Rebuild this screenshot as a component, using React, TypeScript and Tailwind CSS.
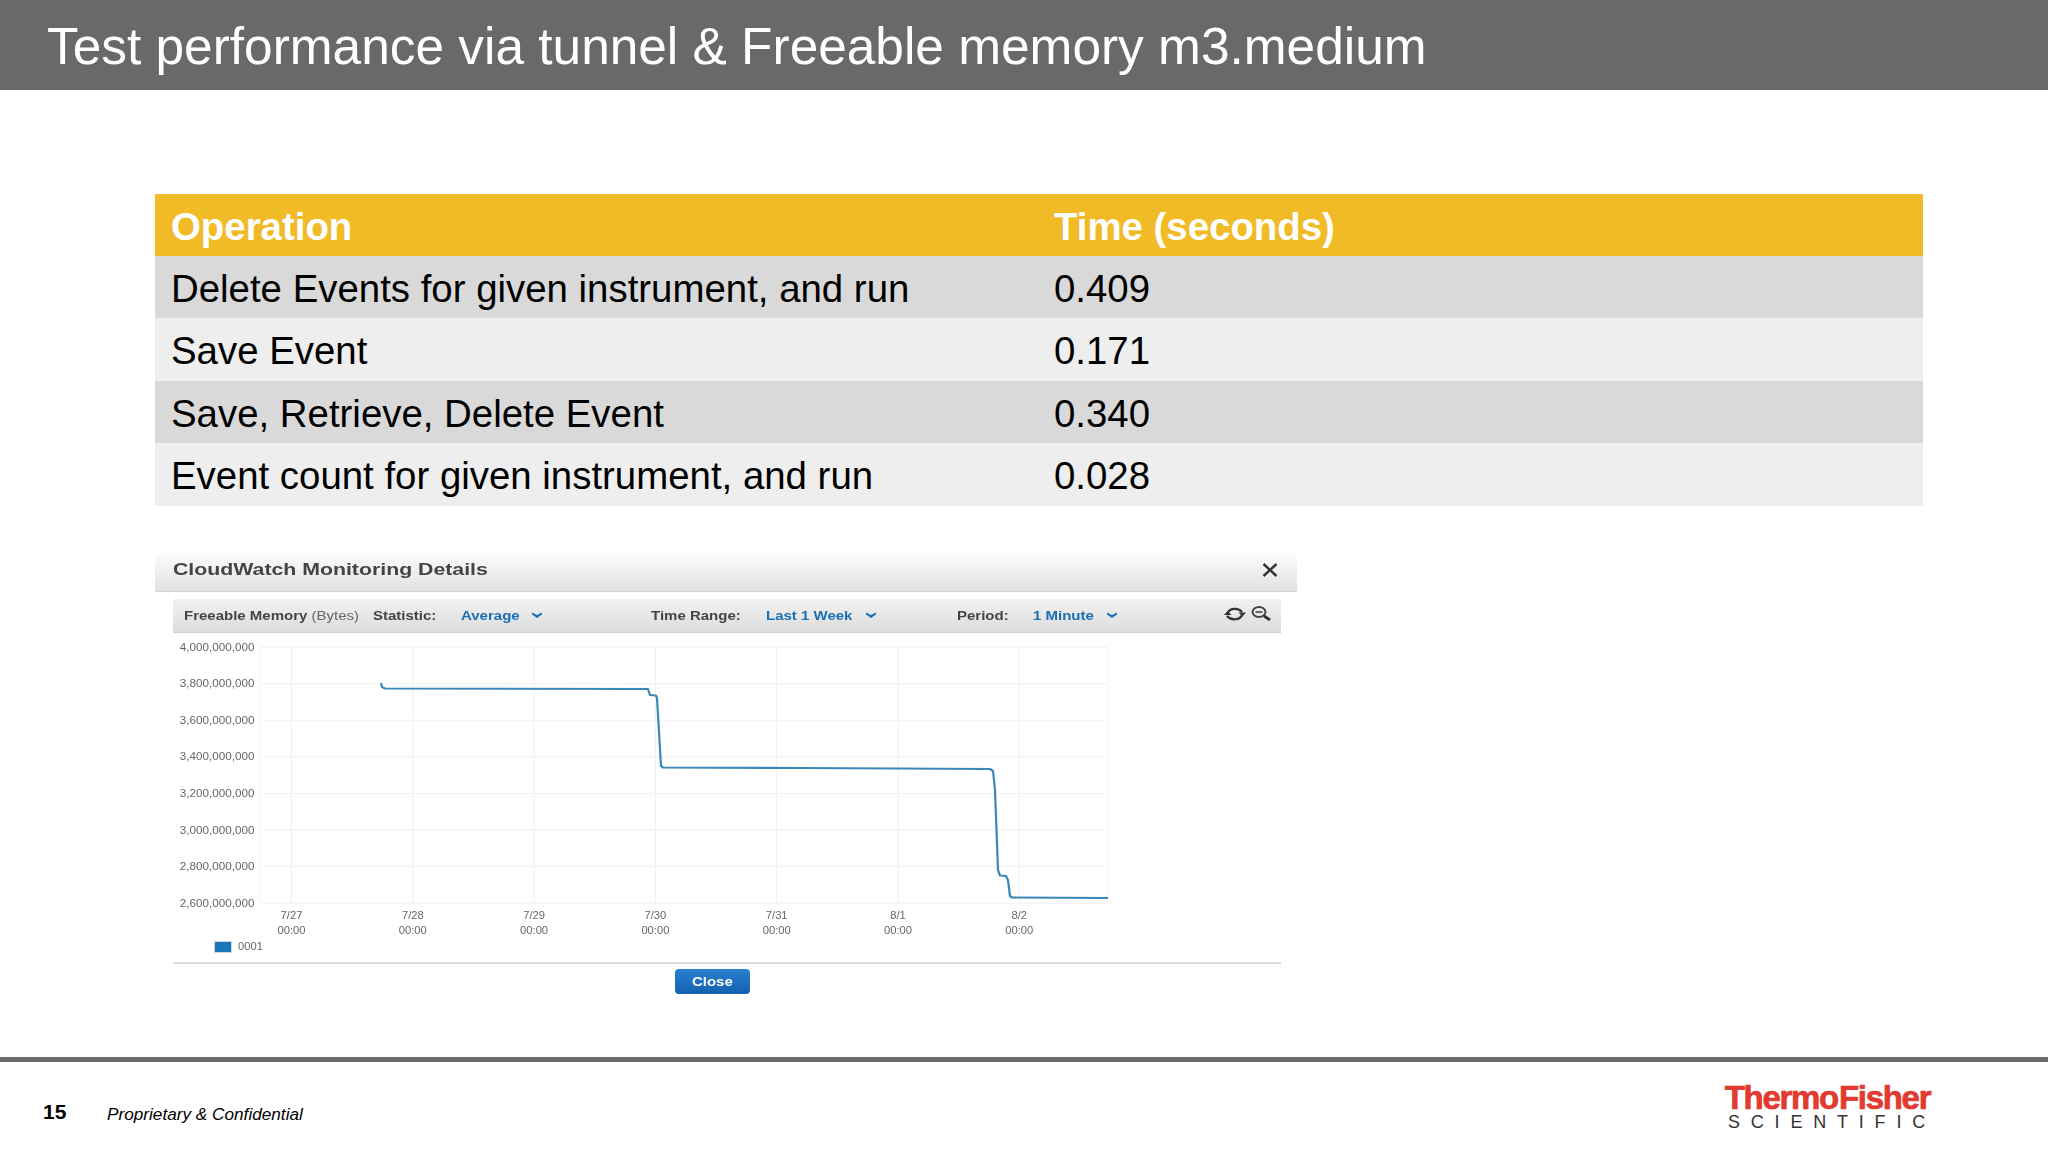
const rows = [
  { op: 'Delete Events for given instrument, and run', time: '0.409', bg: 'bg-[#d9d9d9]' },
  { op: 'Save Event', time: '0.171', bg: 'bg-[#eeeeee]' },
  { op: 'Save, Retrieve, Delete Event', time: '0.340', bg: 'bg-[#d9d9d9]' },
  { op: 'Event count for given instrument, and run', time: '0.028', bg: 'bg-[#eeeeee]' },
];

const yLabels = ['4,000,000,000', '3,800,000,000', '3,600,000,000', '3,400,000,000', '3,200,000,000', '3,000,000,000', '2,800,000,000', '2,600,000,000'];
const xLabels = ['7/27', '7/28', '7/29', '7/30', '7/31', '8/1', '8/2'];

function Chevron({ className }: { className: string }) {
  return (
    <svg viewBox="0 0 10 6" className={`w-[10px] h-[6px] ${className}`}>
      <path d="M0 0.5 L5 3 L10 0.5 L10 2.5 L5 6 L0 2.5 Z" fill="#1a6fb5" />
    </svg>
  );
}

function SyncIcon() {
  return (
    <svg viewBox="0 0 22 14" className="w-[22px] h-[14px] mr-[5px]" fill="none">
      <path d="M4 6 C5 1.5 14 0 18 5" stroke="#333333" strokeWidth="2.2" />
      <path d="M18 8 C16 13 7 14 3 9" stroke="#333333" strokeWidth="2.2" />
      <path d="M14.5 5.5 L22 5.5 L18.5 9.5 Z" fill="#333333" />
      <path d="M0 8 L7.5 8 L3.5 4 Z" fill="#333333" />
    </svg>
  );
}

function ZoomOutIcon() {
  return (
    <svg viewBox="0 0 20 15" className="w-[20px] h-[15px]" fill="none">
      <ellipse cx="8" cy="6" rx="6.5" ry="5" stroke="#444444" strokeWidth="2" />
      <path d="M4.5 6 L11.5 6" stroke="#444444" strokeWidth="1.6" />
      <path d="M13 10 L19 14" stroke="#333333" strokeWidth="2.8" />
    </svg>
  );
}

function Chart() {
  return (
    <svg viewBox="172 633 1108 305" className="block w-[1108px] h-[305px]" fontFamily="'Liberation Sans', Arial, sans-serif">
      {yLabels.map((label, i) => {
        const y = 647 + i * 36.6;
        return (
          <g key={label}>
            <line x1={259} x2={1107} y1={y} y2={y} stroke="#f1f1f3" strokeWidth="1" />
            <text transform={`translate(253.5 ${y + 3.5}) scale(1.17 1)`} textAnchor="end" fontSize="10" fill="#666666">{label}</text>
          </g>
        );
      })}
      <line x1={259} x2={259} y1={647} y2={903} stroke="#f1f1f3" />
      <line x1={1107} x2={1107} y1={647} y2={903} stroke="#f1f1f3" />
      {xLabels.map((label, i) => {
        const x = 290.5 + i * 121.3;
        return (
          <g key={label}>
            <line x1={x} x2={x} y1={647} y2={903} stroke="#efeff2" strokeWidth="1" />
            <text transform={`translate(${x} 919) scale(1.12 1)`} textAnchor="middle" fontSize="10" fill="#666666">{label}</text>
            <text transform={`translate(${x} 934) scale(1.12 1)`} textAnchor="middle" fontSize="10" fill="#666666">00:00</text>
          </g>
        );
      })}
      <path
        d="M380 683 L381 687 L384 688.5 L647 689 L649 695 L655 695.5 L656 698 L660 766 L662 767.5 L800 768 L989 769 L992 771 L994 790 L997 870 L999 875.5 L1005 876 L1007 880 L1009 896 L1011 897.5 L1107 898"
        fill="none"
        stroke="#3a87b8"
        strokeWidth="2.2"
        strokeLinejoin="round"
      />
    </svg>
  );
}

export default function App() {
  return (
    <div className="w-[2048px] h-[1152px] flex flex-col bg-white font-['Liberation_Sans',Arial,sans-serif] overflow-hidden">
      <div className="h-[90px] shrink-0 bg-[#696969] pl-[47px] pt-[4px] flex items-center">
        <h1 className="text-[51.4px] leading-none text-white whitespace-nowrap">Test performance via tunnel &amp; Freeable memory m3.medium</h1>
      </div>

      <div className="flex-1 flex flex-col pl-[155px]">
        {/* Table */}
        <div className="w-[1768px] mt-[104px]">
          <div className="h-[62px] bg-[#f0bb27] pt-[4px] flex items-center text-[38.4px] font-bold text-white">
            <div className="w-[899px] pl-[16px]">Operation</div>
            <div>Time (seconds)</div>
          </div>
          {rows.map((row, i) => (
            <div key={i} className={`h-[62.4px] pt-[3px] flex items-center text-[38.4px] text-black ${row.bg}`}>
              <div className="w-[899px] pl-[16px] whitespace-nowrap">{row.op}</div>
              <div>{row.time}</div>
            </div>
          ))}
        </div>

        {/* CloudWatch dialog */}
        <div className="w-[1142px] mt-[48px] blur-[0.4px]">
          <div className="h-[38px] pb-[4px] flex items-center justify-between pl-[18px] pr-[11px] bg-gradient-to-b from-[#fbfbfb] to-[#e2e2e2] border-b border-[#d4d4d4]">
            <span className="text-[16px] font-bold text-[#444444] scale-x-[1.33] origin-left whitespace-nowrap">CloudWatch Monitoring Details</span>
            <svg viewBox="0 0 16 16" className="w-[16px] h-[16px] mr-[8px]" fill="none">
              <path d="M1.5 2 L14.5 14 M14.5 2 L1.5 14" stroke="#333333" strokeWidth="2.4" />
            </svg>
          </div>
          <div className="ml-[18px] w-[1108px]">
            <div className="mt-[7px] h-[34px] pt-[2px] flex items-center pl-[11px] bg-gradient-to-b from-[#f2f2f2] to-[#dcdcdc] border-b border-[#d0d0d0] text-[12px] font-bold text-[#444444] whitespace-nowrap">
              <div className="w-[189px]">
                <span className="inline-block scale-x-125 origin-left">Freeable Memory <span className="font-normal text-[#666666]">(Bytes)</span></span>
              </div>
              <div className="w-[88px]"><span className="inline-block scale-x-125 origin-left">Statistic:</span></div>
              <div className="w-[71px] text-[#1a6fb5]"><span className="inline-block scale-x-125 origin-left">Average</span></div>
              <Chevron className="mr-[109px] mb-[3px]" />
              <div className="w-[115px]"><span className="inline-block scale-x-125 origin-left">Time Range:</span></div>
              <div className="w-[100px] text-[#1a6fb5]"><span className="inline-block scale-x-125 origin-left">Last 1 Week</span></div>
              <Chevron className="mr-[81px] mb-[3px]" />
              <div className="w-[76px]"><span className="inline-block scale-x-125 origin-left">Period:</span></div>
              <div className="w-[74px] text-[#1a6fb5]"><span className="inline-block scale-x-125 origin-left">1 Minute</span></div>
              <Chevron className="mr-[107px] mb-[3px]" />
              <div className="flex items-center mb-[5px]">
                <SyncIcon />
                <ZoomOutIcon />
              </div>
            </div>
            <Chart />
            <div className="h-[26px] border-b-2 border-[#dddddd] pl-[41px] pt-[2px] flex items-start gap-[6px]">
              <div className="w-[18px] h-[12px] mt-[1px] bg-[#1c75b8] border border-[#c5d9ec]" />
              <span className="text-[10px] leading-[14px] text-[#666666] scale-x-[1.12] origin-left">0001</span>
            </div>
            <div className="mt-[5px] pl-[502px]">
              <button className="w-[75px] h-[25px] rounded-[4px] bg-gradient-to-b from-[#2a80d0] to-[#1560b0] text-[12px] font-bold text-white">
                <span className="inline-block scale-x-[1.25]">Close</span>
              </button>
            </div>
          </div>
        </div>
      </div>

      {/* Footer */}
      <div className="h-[95px] shrink-0 border-t-[5px] border-[#6b6b6b] flex items-start">
        <div className="w-[107px] pl-[43px] pt-[39px] text-[21px] leading-none font-bold text-black">15</div>
        <div className="pt-[44px] text-[17.2px] leading-none italic text-black whitespace-nowrap">Proprietary &amp; Confidential</div>
        <div className="ml-auto mr-[112px] pt-[21px] flex flex-col items-center">
          <div className="text-[33px] leading-[30px] font-bold tracking-[-1.3px] text-[#e23a30] [-webkit-text-stroke:0.7px_#e23a30] whitespace-nowrap">Thermo<span className="ml-[1px]">Fisher</span></div>
          <div className="text-[18px] leading-[18px] pl-[9px] tracking-[10.8px] text-[#333333] whitespace-nowrap">SCIENTIFIC</div>
        </div>
      </div>
    </div>
  );
}
